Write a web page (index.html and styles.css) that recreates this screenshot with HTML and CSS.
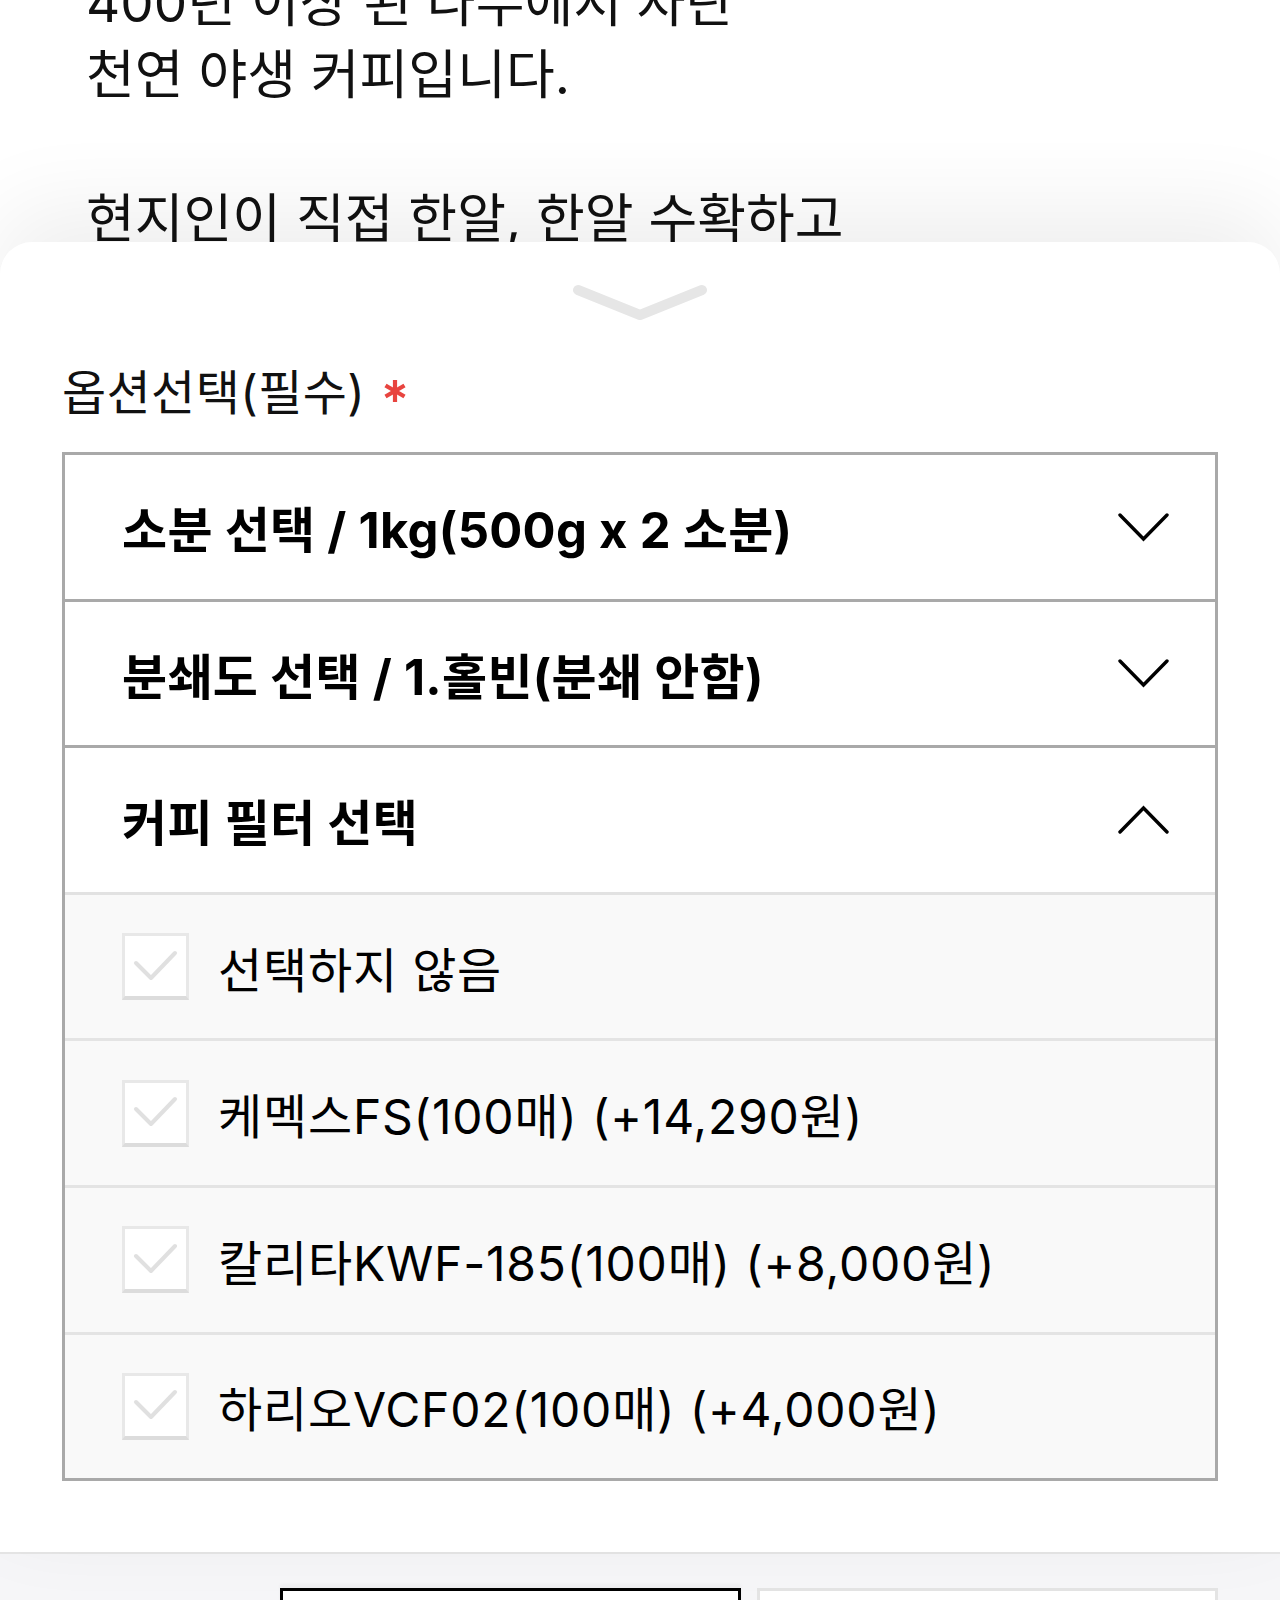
FILE: index.html
```html
<!DOCTYPE html>
<html lang="ko">
<head>
    <meta charset="UTF-8">
    <meta name="viewport" content="width=device-width, initial-scale=1.0">
    <title>옵션선택</title>
    <link rel="stylesheet" href="styles.css">
</head>
<body>
    <div class="screen">
        <div class="desc">
            <p>400년 이상 된 나무에서 자란<br>천연 야생 커피입니다.<br><br>현지인이 직접 한알, 한알 수확하고<br>자연 건조한 커피입니다.</p>
        </div>

        <div class="sheet">
            <div class="handle">
                <svg width="136" height="40" viewBox="0 0 136 40">
                    <polyline points="6,8 68,33 130,8" fill="none" stroke="#e6e6e6" stroke-width="10" stroke-linecap="round" stroke-linejoin="round"/>
                </svg>
            </div>

            <div class="option-label">
                <span>옵션선택(필수)</span>
                <svg class="req" width="24" height="24" viewBox="0 0 24 24">
                    <g stroke="#e8443f" stroke-width="4.2" stroke-linecap="butt">
                        <line x1="12" y1="1" x2="12" y2="23"/>
                        <line x1="2.5" y1="6.5" x2="21.5" y2="17.5"/>
                        <line x1="2.5" y1="17.5" x2="21.5" y2="6.5"/>
                    </g>
                </svg>
            </div>

            <div class="option-box">
                <div class="select-row">
                    <span class="select-title">소분 선택 / 1kg(500g x 2 소분)</span>
                    <svg class="chevron" width="51" height="30" viewBox="0 0 51 30">
                        <polyline points="2,3 25.5,27 49,3" fill="none" stroke="#000" stroke-width="3.4" stroke-linecap="round"/>
                    </svg>
                </div>
                <div class="select-row">
                    <span class="select-title">분쇄도 선택 / 1.홀빈(분쇄 안함)</span>
                    <svg class="chevron" width="51" height="30" viewBox="0 0 51 30">
                        <polyline points="2,3 25.5,27 49,3" fill="none" stroke="#000" stroke-width="3.4" stroke-linecap="round"/>
                    </svg>
                </div>
                <div class="select-row open">
                    <span class="select-title">커피 필터 선택</span>
                    <svg class="chevron" width="51" height="30" viewBox="0 0 51 30">
                        <polyline points="2,27 25.5,3 49,27" fill="none" stroke="#000" stroke-width="3.4" stroke-linecap="round"/>
                    </svg>
                </div>

                <div class="option-item">
                    <span class="checkbox">
                        <svg width="61" height="61" viewBox="0 0 61 61"><polyline points="11,27 26,42 50,17" fill="none" stroke="#e0e0e0" stroke-width="4" stroke-linecap="round" stroke-linejoin="round"/></svg>
                    </span>
                    <span class="option-name">선택하지 않음</span>
                </div>
                <div class="option-item">
                    <span class="checkbox">
                        <svg width="61" height="61" viewBox="0 0 61 61"><polyline points="11,27 26,42 50,17" fill="none" stroke="#e0e0e0" stroke-width="4" stroke-linecap="round" stroke-linejoin="round"/></svg>
                    </span>
                    <span class="option-name">케멕스FS(100매) (+14,290원)</span>
                </div>
                <div class="option-item">
                    <span class="checkbox">
                        <svg width="61" height="61" viewBox="0 0 61 61"><polyline points="11,27 26,42 50,17" fill="none" stroke="#e0e0e0" stroke-width="4" stroke-linecap="round" stroke-linejoin="round"/></svg>
                    </span>
                    <span class="option-name">칼리타KWF-185(100매) (+8,000원)</span>
                </div>
                <div class="option-item">
                    <span class="checkbox">
                        <svg width="61" height="61" viewBox="0 0 61 61"><polyline points="11,27 26,42 50,17" fill="none" stroke="#e0e0e0" stroke-width="4" stroke-linecap="round" stroke-linejoin="round"/></svg>
                    </span>
                    <span class="option-name">하리오VCF02(100매) (+4,000원)</span>
                </div>
            </div>
        </div>

        <div class="action-bar">
            <button class="btn btn-outline"></button>
            <button class="btn btn-light"></button>
        </div>
    </div>
</body>
</html>
```

FILE: styles.css
```css
body {
    margin: 0;
    padding: 0;
    background: #ffffff;
    font-family: Inter, "Noto Sans CJK KR", sans-serif;
    color: #111;
}
.screen {
    width: 1280px;
    height: 1600px;
    overflow: hidden;
}
.desc {
    height: 242px;
    overflow: hidden;
    padding-left: 86px;
}
.desc p {
    margin: -33px 0 0;
    font-size: 53px;
    line-height: 72px;
}
.sheet {
    position: relative;
    background: #fff;
    border-radius: 32px 32px 0 0;
    box-shadow: 0 -30px 90px rgba(0, 0, 0, 0.07);
    padding: 40px 62px 71px;
}
.handle {
    display: flex;
    justify-content: center;
    height: 40px;
}
.option-label {
    display: flex;
    align-items: center;
    gap: 18px;
    margin-top: 41px;
    font-size: 48px;
    line-height: 60px;
    letter-spacing: 0.4px;
}
.req {
    margin-top: -4px;
}
.option-box {
    margin-top: 29px;
    border: 3px solid #a9a9a9;
}
.select-row {
    display: flex;
    justify-content: space-between;
    align-items: center;
    height: 143.6px;
    padding: 0 46px 0 57px;
    border-bottom: 3px solid #a9a9a9;
    background: #fff;
}
.select-row.open {
    border-bottom-color: #e2e2e2;
}
.select-title {
    font-size: 49px;
    font-weight: 700;
    letter-spacing: 0.3px;
    color: #000;
}
.option-item {
    display: flex;
    align-items: center;
    height: 143.6px;
    padding-left: 57px;
    background: #f9f9f9;
    border-bottom: 3px solid #e4e4e4;
}
.option-item:last-child {
    border-bottom: none;
}
.checkbox {
    display: flex;
    align-items: center;
    justify-content: center;
    width: 61px;
    height: 60px;
    border: 3px solid #e8e8e8;
    border-bottom: 4px solid #dcdcdc;
    background: #fff;
    margin-right: 29px;
}
.option-name {
    font-size: 48px;
    letter-spacing: 0.8px;
    color: #000;
}
.action-bar {
    display: flex;
    justify-content: flex-end;
    gap: 16px;
    padding: 34px 62px 0;
    background: #f6f6f8;
    border-top: 2px solid #e6e6e6;
    height: 200px;
}
.btn {
    width: 461px;
    height: 100px;
    background: #fff;
    padding: 0;
}
.btn-outline {
    border: 3px solid #000;
    box-shadow: 0 -4px 3px rgba(0, 0, 0, 0.03);
}
.btn-light {
    border: 3px solid #e4e4e4;
}
```
